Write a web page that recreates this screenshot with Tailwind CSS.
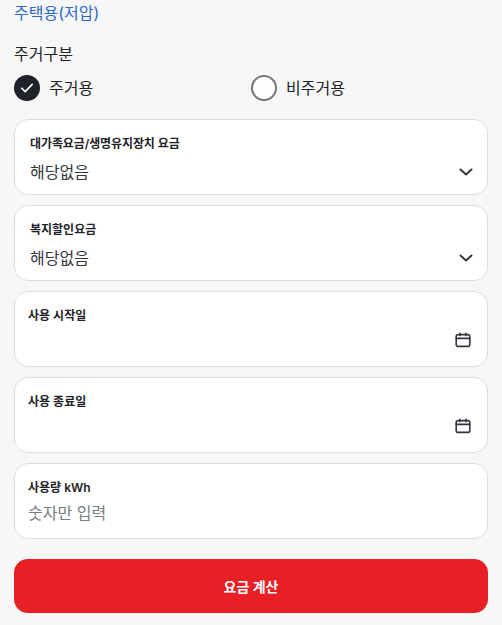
<!doctype html>
<html lang="ko">
  <head>
    <meta charset="UTF-8" />
    <title>요금 계산</title>
    <script src="https://cdn.jsdelivr.net/npm/@tailwindcss/browser@4"></script>
  </head>
  <body class="bg-[#f7f7f8] h-[625px] overflow-hidden font-['Inter','Noto_Sans_CJK_KR',sans-serif] text-[#1f2229]">
    <main class="px-3.5 pt-[1px]">
      <p class="text-[16px] leading-[24px] text-[#2a69c8]">주택용(저압)</p>

      <p class="mt-[17px] text-[16px] leading-[24px]">주거구분</p>
      <div class="mt-[9px] flex items-center h-[26px]">
        <label class="flex items-center gap-[9px] w-[237px] text-[16px]">
          <span class="w-[26px] h-[26px] rounded-full bg-[#1f2229] flex items-center justify-center">
            <svg width="14" height="14" viewBox="0 0 14 14" fill="none" stroke="#fff" stroke-width="1.6" stroke-linecap="round" stroke-linejoin="round"><path d="M1.8 7.2l3.4 3.4 7-7.2" /></svg>
          </span>
          주거용
        </label>
        <label class="flex items-center gap-[9px] text-[16px]">
          <span class="w-[26px] h-[26px] rounded-full border-2 border-[#777] bg-white"></span>
          비주거용
        </label>
      </div>

      <div class="mt-[18px] flex flex-col gap-[10px]">
        <div class="h-[76px] rounded-[14px] border border-[#dcdde0] bg-white pl-[15px] pr-[13px] pt-[15px]">
          <p class="text-[12px] leading-[18px] font-semibold tracking-[-0.1px]">대가족요금/생명유지장치 요금</p>
          <div class="mt-[7px] flex items-center justify-between">
            <span class="text-[16px] leading-[24px] text-[#33363c]">해당없음</span>
            <svg width="16" height="16" viewBox="0 0 16 16" fill="none" stroke="#33363c" stroke-width="2" stroke-linecap="round" stroke-linejoin="round"><path d="M2.5 5.5L8 10.5l5.5-5" /></svg>
          </div>
        </div>

        <div class="h-[76px] rounded-[14px] border border-[#dcdde0] bg-white pl-[15px] pr-[13px] pt-[15px]">
          <p class="text-[12px] leading-[18px] font-semibold">복지할인요금</p>
          <div class="mt-[7px] flex items-center justify-between">
            <span class="text-[16px] leading-[24px] text-[#33363c]">해당없음</span>
            <svg width="16" height="16" viewBox="0 0 16 16" fill="none" stroke="#33363c" stroke-width="2" stroke-linecap="round" stroke-linejoin="round"><path d="M2.5 5.5L8 10.5l5.5-5" /></svg>
          </div>
        </div>

        <div class="h-[76px] rounded-[14px] border border-[#dcdde0] bg-white pl-[13px] pr-[16px] pt-[15px]">
          <p class="text-[12px] leading-[18px] font-semibold">사용 시작일</p>
          <div class="mt-[3px] flex items-center justify-end h-[24px]">
            <svg width="16" height="16" viewBox="0 0 16 16" fill="none" stroke="#33363c" stroke-width="1.6" stroke-linecap="round" stroke-linejoin="round"><rect x="1.2" y="2.6" width="13.6" height="11.8" rx="2" /><path d="M1.2 6.4h13.6M5 1.2v2.4M11 1.2v2.4" /></svg>
          </div>
        </div>

        <div class="h-[76px] rounded-[14px] border border-[#dcdde0] bg-white pl-[13px] pr-[16px] pt-[15px]">
          <p class="text-[12px] leading-[18px] font-semibold">사용 종료일</p>
          <div class="mt-[3px] flex items-center justify-end h-[24px]">
            <svg width="16" height="16" viewBox="0 0 16 16" fill="none" stroke="#33363c" stroke-width="1.6" stroke-linecap="round" stroke-linejoin="round"><rect x="1.2" y="2.6" width="13.6" height="11.8" rx="2" /><path d="M1.2 6.4h13.6M5 1.2v2.4M11 1.2v2.4" /></svg>
          </div>
        </div>

        <div class="h-[76px] rounded-[14px] border border-[#dcdde0] bg-white pl-[13px] pr-[13px] pt-[15px]">
          <p class="text-[12px] leading-[18px] font-semibold">사용량 kWh</p>
          <p class="mt-[4px] text-[16px] leading-[24px] text-[#777b82]">숫자만 입력</p>
        </div>
      </div>

      <button class="mt-[20px] w-full h-[54px] rounded-[14px] bg-[#e81f25] text-white text-[14px] font-bold">요금 계산</button>
    </main>
  </body>
</html>
